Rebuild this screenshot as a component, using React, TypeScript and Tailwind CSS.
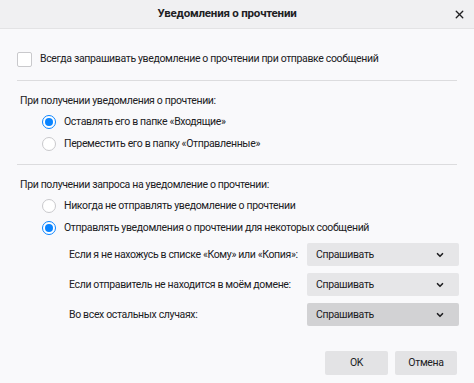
import { ChevronDown, X } from 'lucide-react';

function Radio({ checked }: { checked?: boolean }) {
  return (
    <span
      className={`w-[14px] h-[14px] rounded-full border flex items-center justify-center bg-white flex-shrink-0 ${
        checked ? 'border-[#0a84ff]' : 'border-[#c9c9cc]'
      }`}
    >
      {checked && <span className="w-[8px] h-[8px] rounded-full bg-[#0a84ff]" />}
    </span>
  );
}

function RadioRow({ label, checked }: { label: string; checked?: boolean }) {
  return (
    <div className="flex items-center gap-[8px] h-[22px] pl-[25px]">
      <Radio checked={checked} />
      <span>{label}</span>
    </div>
  );
}

function Select({ dark }: { dark?: boolean }) {
  return (
    <div
      className={`w-[152px] h-[23px] rounded-[2px] flex items-center justify-between pl-[9px] pr-[14px] ${
        dark ? 'bg-[#d2d2d4]' : 'bg-[#e6e6e8]'
      }`}
    >
      <span>Спрашивать</span>
      <ChevronDown className="w-[10px] h-[10px]" strokeWidth={4} />
    </div>
  );
}

export default function App() {
  const rules = [
    { label: 'Если я не нахожусь в списке «Кому» или «Копия»:' },
    { label: 'Если отправитель не находится в моём домене:' },
    { label: 'Во всех остальных случаях:', dark: true },
  ];

  return (
    <div
      className="w-[474px] h-[383px] bg-[#f9f9fb] text-[#202023] text-[10.5px] tracking-[-0.35px] flex flex-col overflow-hidden whitespace-nowrap"
      style={{ fontFamily: 'Roboto, "Noto Sans", sans-serif' }}
    >
      {/* Title bar */}
      <div className="h-[29px] bg-[#f0f0f2] border-b border-[#e3e3e5] flex items-center justify-center pr-[20px] relative flex-shrink-0">
        <span className="text-[11.5px] font-bold tracking-[-0.2px]">Уведомления о прочтении</span>
        <X className="absolute right-[8px] top-[8px] w-[13px] h-[13px]" strokeWidth={2.5} />
      </div>

      <div className="px-[17px] flex flex-col">
        {/* Always request */}
        <div className="flex items-center gap-[8px] mt-[22px] h-[16px]">
          <span className="w-[15px] h-[15px] rounded-[2px] border border-[#c9c9cc] bg-white flex-shrink-0" />
          <span>Всегда запрашивать уведомление о прочтении при отправке сообщений</span>
        </div>

        <div className="h-px bg-[#dcdcde] mt-[13px]" />

        {/* On receiving receipt */}
        <div className="mt-[11px] h-[18px] pl-[3px] flex items-center">При получении уведомления о прочтении:</div>
        <div className="mt-[1px]">
          <RadioRow label="Оставлять его в папке «Входящие»" checked />
          <RadioRow label="Переместить его в папку «Отправленные»" />
        </div>

        <div className="h-px bg-[#dcdcde] mt-[9px]" />

        {/* On receiving request */}
        <div className="mt-[11px] h-[18px] pl-[3px] flex items-center">При получении запроса на уведомление о прочтении:</div>
        <div className="mt-[1px]">
          <RadioRow label="Никогда не отправлять уведомление о прочтении" />
          <RadioRow label="Отправлять уведомления о прочтении для некоторых сообщений" checked />
        </div>

        <div className="mt-[4px] pl-[52px] grid grid-cols-[238px_152px] gap-y-[7px] items-center">
          {rules.map((r) => (
            <div key={r.label} className="contents">
              <span>{r.label}</span>
              <Select dark={r.dark} />
            </div>
          ))}
        </div>

        {/* Buttons */}
        <div className="flex justify-end gap-[7px] mt-[25px]">
          <button className="w-[63px] h-[24px] bg-[#e3e3e5] rounded-[2px]">OK</button>
          <button className="w-[62px] h-[24px] bg-[#e3e3e5] rounded-[2px]">Отмена</button>
        </div>
      </div>
    </div>
  );
}
